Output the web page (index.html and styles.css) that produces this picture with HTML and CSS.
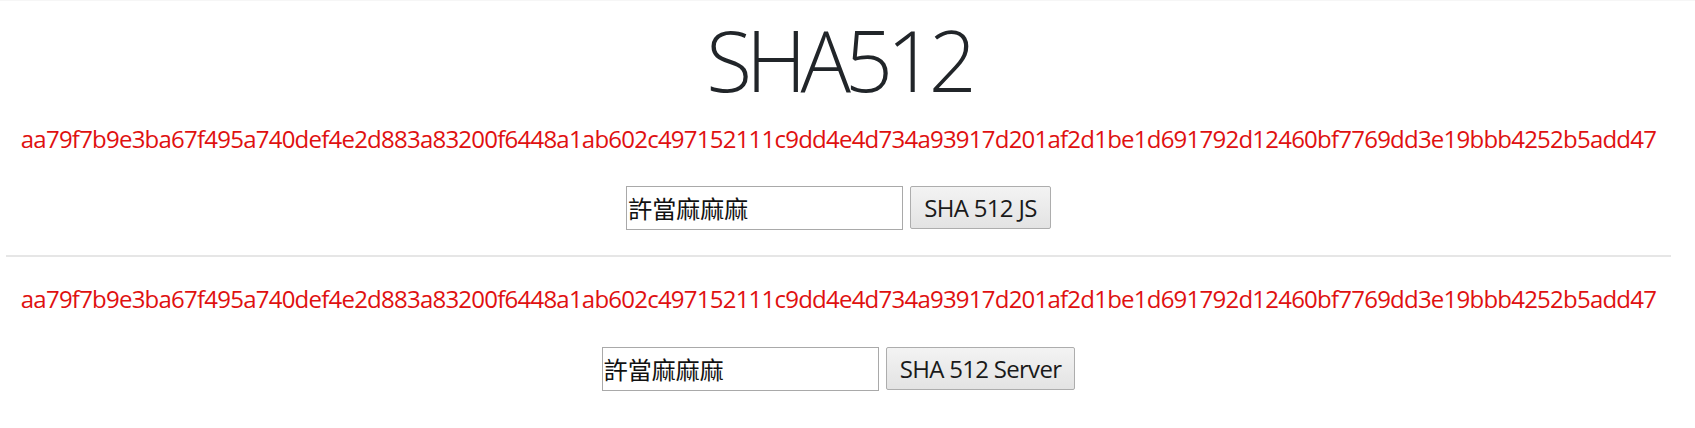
FILE: index.html
```html
<!DOCTYPE html>
<html lang="zh-Hant">
<head>
<meta charset="utf-8">
<title>SHA512</title>
<link rel="stylesheet" href="styles.css">
</head>
<body>
<main class="page">
  <h1 class="title">SHA512</h1>
  <p class="hash">aa79f7b9e3ba67f495a740def4e2d883a83200f6448a1ab602c497152111c9dd4e4d734a93917d201af2d1be1d691792d12460bf7769dd3e19bbb4252b5add47</p>
  <div class="row">
    <input class="field" type="text" value="許當麻麻麻">
    <button class="btn" type="button">SHA 512 JS</button>
  </div>
  <hr class="divider">
  <p class="hash hash-second">aa79f7b9e3ba67f495a740def4e2d883a83200f6448a1ab602c497152111c9dd4e4d734a93917d201af2d1be1d691792d12460bf7769dd3e19bbb4252b5add47</p>
  <div class="row">
    <input class="field" type="text" value="許當麻麻麻">
    <button class="btn" type="button">SHA 512 Server</button>
  </div>
</main>
</body>
</html>
```
FILE: styles.css
```css
html, body {
  margin: 0;
  padding: 0;
  background: #ffffff;
}

body {
  border-top: 1px solid #f6f6f6;
  font-family: "Open Sans", "Noto Sans", "Noto Sans CJK TC", sans-serif;
  font-size: 24px;
  color: #212529;
}

.page {
  margin: 0 24px 0 6px;
  display: flex;
  flex-direction: column;
  align-items: center;
}

.title {
  margin: 9px 0 0;
  font-size: 84px;
  font-weight: 300;
  line-height: 1.2;
  letter-spacing: -6px;
  color: #212529;
}

.hash {
  margin: 10px 0 0;
  line-height: 36px;
  font-size: 24px;
  letter-spacing: -0.77px;
  color: #e01010;
  white-space: nowrap;
}

.hash-second {
  margin-top: 24px;
}

.row {
  margin-top: 29px;
  display: flex;
  align-items: center;
  gap: 7px;
}

.hash-second + .row {
  margin-top: 30px;
}

.field {
  box-sizing: border-box;
  width: 277px;
  height: 44px;
  margin: 0;
  padding: 0 1px;
  border: 1px solid #a9a9a9;
  border-radius: 0;
  background: #fff;
  font-family: "Noto Sans CJK TC", "Noto Sans CJK SC", sans-serif;
  font-size: 24px;
  color: #111;
  outline: none;
}

.btn {
  box-sizing: border-box;
  height: 43px;
  margin: 0;
  padding: 0 13px;
  border: 1px solid #adadad;
  border-radius: 2px;
  background: linear-gradient(#f3f3f3, #e3e3e3);
  font-family: "Open Sans", "Noto Sans", sans-serif;
  font-size: 24px;
  letter-spacing: -0.7px;
  color: #1a1a1a;
}

.divider {
  align-self: stretch;
  margin: 25px 0 0;
  height: 0;
  border: 0;
  border-top: 2px solid #e6e6e6;
}
```
